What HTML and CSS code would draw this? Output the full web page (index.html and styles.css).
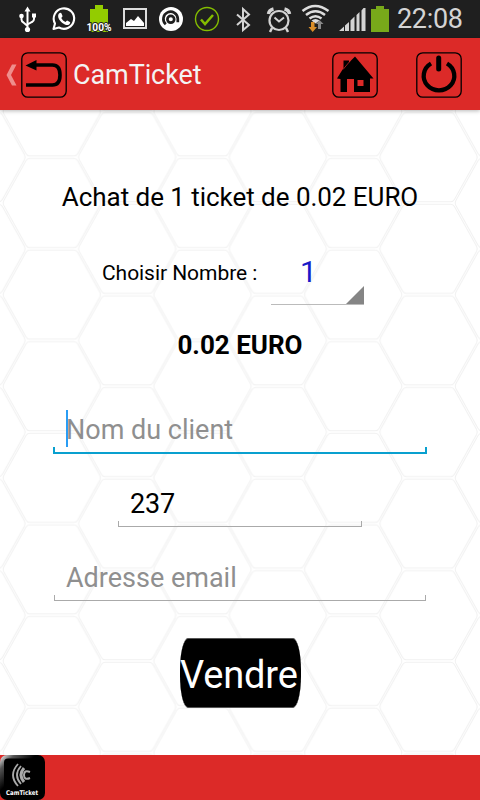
FILE: index.html
```html
<!DOCTYPE html>
<html lang="fr">
<head>
<meta charset="utf-8">
<title>CamTicket</title>
<link rel="stylesheet" href="styles.css">
</head>
<body>
<div class="screen">
  <div class="status">
    <!-- usb -->
    <svg class="slot" viewBox="0 0 36 38" fill="none" stroke="#fff" stroke-width="2"><path d="M18.500 11v18M12.500 17v2.500q0 2 2 3l4 3.500M25 17v2q0 2-2 3l-4.500 2.500"/><path d="M18.500 6.500l3 5h-6z" fill="#fff" stroke="none"/><circle cx="18.500" cy="29.500" r="2.600" fill="#fff" stroke="none"/><circle cx="12.500" cy="16" r="2.300" fill="#fff" stroke="none"/><path d="M23 13.500h4v4h-4z" fill="#fff" stroke="none"/></svg>
    <!-- phone chat -->
    <svg class="slot" viewBox="0 0 36 38"><path d="M8.500 29l1.500-5.500A10.200 10.200 0 1 1 14 27.500z" fill="none" stroke="#fff" stroke-width="2.100" stroke-linejoin="round"/><path d="M14 13.500c1-1 2-1 2.500 0l1 2.500c.2.700-.8 1.300-1.200 2 1 2 2.300 3.200 4.300 4 .7-.5 1.200-1.700 2-1.300l2.300 1.300c1 .600-.3 2.500-1.700 3-3 .8-8-3-9.500-6.500-.8-1.800-.8-3.700.3-5z" fill="#fff"/></svg>
    <!-- charge level -->
    <svg class="slot" viewBox="0 0 36 38"><path d="M9 9h5V5h8v4h5v23H9z" fill="#93cc00"/><text class="charge" x="18" y="30.800" text-anchor="middle" textLength="25" lengthAdjust="spacingAndGlyphs">100%</text></svg>
    <!-- picture -->
    <svg class="slot" viewBox="0 0 36 38"><path d="M7 9h22v19H7z" fill="none" stroke="#ddd" stroke-width="2"/><path d="M9 26v-3l5-4 3 2 4-5 6 7v3z" fill="#fff"/></svg>
    <!-- round a -->
    <svg class="slot" viewBox="0 0 36 38"><circle cx="18" cy="19" r="12" fill="#fff"/><g fill="none" stroke="#1f1f1f" stroke-width="2.700"><circle cx="17.800" cy="19.300" r="3.400"/><path d="M12.800 24.300a7.200 7.200 0 1 1 12-5.500v3.500"/></g></svg>
    <!-- check -->
    <svg class="slot" viewBox="0 0 36 38" fill="none" stroke="#84bd00"><circle cx="18" cy="19" r="11.500" stroke-width="1.400"/><path d="M12 19.500l4 4.500 8-9" stroke-width="2.500"/></svg>
    <!-- bluetooth -->
    <svg class="slot" viewBox="0 0 36 38" fill="none" stroke="#d4d4d4" stroke-width="2"><path d="M12 14.500L24 25l-6 5V9l6 5.500L12 25"/></svg>
    <!-- alarm -->
    <svg class="slot" viewBox="0 0 36 38" fill="none" stroke="#d4d4d4"><circle cx="18" cy="20.500" r="9.500" stroke-width="2.200"/><path d="M13.500 17.500l4.500 4 5-4" stroke-width="2"/><path d="M7.500 14q.5-4 5-5M28.500 14q-.5-4-5-5" stroke-width="3.500"/><path d="M11 28l-2 4M25 28l2 4" stroke-width="2.500"/></svg>
    <!-- wifi -->
    <svg class="slot" viewBox="0 0 36 38" fill="none" stroke="#ddd" stroke-width="2.500"><path d="M5.500 11q12.500-10 26 0M9 15q9.500-7.500 19 0M12.500 18.500q6-4.500 12 0"/><path d="M14.500 20.500q4-3 8 0l-4 3z" fill="#ddd" stroke="none"/><path d="M14 22h3.500v5h2.500L15.700 32 11.500 27H14z" fill="#da8e29" stroke="none"/><path d="M21 29v-5h-2l3.500-4 4 4H24v5z" fill="#8a8a8a" stroke="none"/></svg>
    <!-- signal -->
    <svg class="slot" viewBox="0 0 36 38" fill="#d4d4d4"><path d="M6 31l5-4.500V31zM12 25.500l4-3.500v9h-4zM17.500 20.500l4-4V31h-4zM23.500 15l3-3v19h-3zM28.500 10.500l2-2.500h2v23h-4z"/></svg>
    <svg class="power" viewBox="0 0 20 38"><path d="M1 9h5V6h8v3h5v23H1z" fill="#78a91a"/></svg>
    <span class="clock">22:08</span>
  </div>

  <header class="bar">
    <svg class="chevron" viewBox="0 0 12 24"><path d="M7 1.500h4.500L6 12l5.500 10.500H7L1.500 12z" fill="#ef8e8c"/></svg>
    <svg class="tool" viewBox="0 0 46 46"><rect class="frame" x=".8" y=".8" width="44.400" height="44.400" rx="6"/><path d="M12 13h19.500q7.500 0 7.500 10t-7.500 10H5" fill="none" stroke="#000" stroke-width="3.600"/><path d="M4.500 13.500l11-5.500v10.500z"/></svg>
    <h1 class="title"><span>CamTicket</span></h1>
    <svg class="tool home" viewBox="0 0 46 46"><rect class="frame" x=".8" y=".8" width="44.400" height="44.400" rx="6"/><path d="M11.500 16V8.500H17v2L23 4.500 41.500 26.500H38V40H22V27h-7v13H8.500V27L5 26.500zM25.500 28v6h6v-6z" fill-rule="evenodd"/><path d="M11 17.500l7.500-9" stroke="#dc2a28" stroke-width=".7"/></svg>
    <svg class="tool" viewBox="0 0 46 46"><rect class="frame" x=".8" y=".8" width="44.400" height="44.400" rx="6"/><path d="M15 11.500A15.300 14.500 0 1 0 31 11.500" fill="none" stroke="#000" stroke-width="4.300"/><path d="M22.700 6v11" fill="none" stroke="#000" stroke-width="5" stroke-linecap="round"/></svg>
  </header>

  <main class="content">
    <svg class="honeycomb" width="480" height="645">
      <defs>
        <path id="cell" d="M-22-44.600H22Q24.600-44.600 26-42L48-2.500Q49.300 0 48 2.500L26 42Q24.600 44.600 22 44.600H-22Q-24.600 44.600-26 42L-48 2.500Q-49.300 0-48-2.500L-26-42Q-24.600-44.600-22-44.600Z" fill="none" stroke="#f1f1f1"/>
        <pattern id="comb" width="150.700" height="91.600" patternUnits="userSpaceOnUse" patternTransform="translate(51.800 93)">
          <use href="#cell"/><use href="#cell" x="150.700"/><use href="#cell" y="91.600"/><use href="#cell" x="150.700" y="91.600"/><use href="#cell" x="75.350" y="45.800"/>
        </pattern>
      </defs>
      <rect width="480" height="645" fill="url(#comb)"/>
    </svg>
    <p class="heading"><span>Achat de 1 ticket de 0.02 EURO</span></p>
    <div class="choose">
      <span class="label"><span>Choisir Nombre :</span></span>
      <div class="spinner"><span>1</span><svg class="corner" viewBox="0 0 18 18"><path d="M18 0v18H0z" fill="#858585"/></svg></div>
    </div>
    <p class="total"><span>0.02 EURO</span></p>
    <div class="field focus"><i class="caret"></i><span>Nom du client</span></div>
    <div class="field phone"><span>237</span></div>
    <div class="field mail"><span>Adresse email</span></div>
    <button class="sell"><span>Vendre</span></button>
  </main>

  <footer class="foot">
    <svg class="logo" viewBox="0 0 45 45">
      <defs><linearGradient id="shine" x1="0" y1="0" x2=".4" y2=".4"><stop offset="0" stop-color="#fff"/><stop offset=".4" stop-color="#555"/><stop offset="1" stop-color="#000"/></linearGradient></defs>
      <rect width="45" height="45" rx="7" fill="url(#shine)"/><rect x="4" y="3.500" width="38" height="38" rx="4"/>
      <g fill="none" stroke="#aaa"><path d="M18 9q-10 11 0 22M21 11q-8 9 0 18" stroke-width="1.800"/><path d="M24 13q-6 7 0 14" stroke-width="3"/><path d="M30 17q-6-2.500-6 3t6 3" stroke-width="2"/></g>
      <text class="logo-text" x="6" y="40" textLength="32" lengthAdjust="spacingAndGlyphs">CamTicket</text>
    </svg>
  </footer>
</div>
</body>
</html>
```

FILE: styles.css
```css
* { box-sizing: border-box; }
body { margin: 0; font-family: Roboto, "Liberation Sans", sans-serif; }
p, h1 { margin: 0; font-weight: 400; }
.screen { width: 480px; height: 800px; display: flex; flex-direction: column; overflow: hidden; background: #fff; }
.status { height: 38px; background: #1f1f1f; display: flex; padding-left: 9px; color: #d4d4d4; }
.slot { width: 36px; height: 38px; flex: none; }
.charge { font: 700 10px Roboto, sans-serif; fill: #fff; stroke: #1f1f1f; stroke-width: 2px; paint-order: stroke; }
.power { width: 20px; height: 38px; flex: none; margin-left: 1px; }
.clock { font-size: 27px; line-height: 39px; margin-left: 7px; letter-spacing: -.3px; white-space: nowrap; }
.bar { height: 72px; flex: none; background: #dc2a28; display: flex; align-items: center; padding: 2px 18px 0 5px; box-shadow: 0 1px 4px rgba(0,0,0,.28); position: relative; z-index: 1; }
.chevron { width: 12px; height: 24px; margin-right: 4px; }
.tool { width: 46px; height: 46px; flex: none; }
.frame { fill: none; stroke: #000; stroke-width: 1.300; }
.title { flex: 1; font-size: 27px; line-height: 32px; color: #f3f3f3; margin-left: 6px; letter-spacing: -.1px; }
.home { margin-right: 38px; }
.content { position: relative; height: 645px; flex: none; display: flex; flex-direction: column; align-items: center; color: #000; }
.content > :not(.honeycomb) { position: relative; flex: none; }
.honeycomb { position: absolute; inset: 0; }
.heading { font-size: 26px; line-height: 32px; margin-top: 71px; letter-spacing: -.04px; white-space: nowrap; }
.choose { display: flex; height: 62px; width: 262px; margin: 30px 0 0 102px; align-self: flex-start; }
.label { font-size: 21px; line-height: 60px; width: 169px; letter-spacing: -.05px; white-space: nowrap; }
.spinner { width: 93px; position: relative; border-bottom: 1px solid #bbb; font-size: 30px; line-height: 58px; color: #1919c8; padding-left: 29px; }
.corner { position: absolute; right: 0; bottom: 0; width: 18px; height: 18px; }
.total { font-size: 26px; line-height: 32px; font-weight: 700; margin-top: 24px; }
.field { width: 372px; height: 48px; padding-left: 12px; font-size: 27px; line-height: 32px; color: #8f8f8f; border-bottom: 1px solid #aaa; }
.field::before, .field::after { content: ""; position: absolute; bottom: 0; width: 1px; height: 5px; background: #aaa; }
.field::before { left: 0; }
.field::after { right: 0; }
.focus { width: 374px; height: 45px; margin-top: 48px; padding: 5px 0 0 13px; border-bottom: 2px solid #09a0cf; }
.focus::before, .focus::after { width: 2px; height: 7px; bottom: -2px; background: #09a0cf; }
.caret { position: absolute; left: 13px; top: 1px; width: 2px; height: 37px; background: #2a9df4; }
.phone { width: 244px; height: 39px; margin-top: 34px; color: #000; letter-spacing: -.2px; }
.mail { height: 39px; margin-top: 35px; }
.sell { width: 121px; height: 70px; margin: 37px 0 0 1px; padding: 0; border: 1px solid #555; border-width: 1px 0; border-radius: 8px / 32px; background: #000; color: #fff; font: 38px/72px Roboto, sans-serif; letter-spacing: -.15px; text-align: left; white-space: nowrap; }
.foot { height: 45px; flex: none; background: #dc2a28; }
.logo { display: block; width: 45px; height: 45px; }
.logo-text { font: 700 6.5px "DejaVu Sans", sans-serif; fill: #fff; }
```
